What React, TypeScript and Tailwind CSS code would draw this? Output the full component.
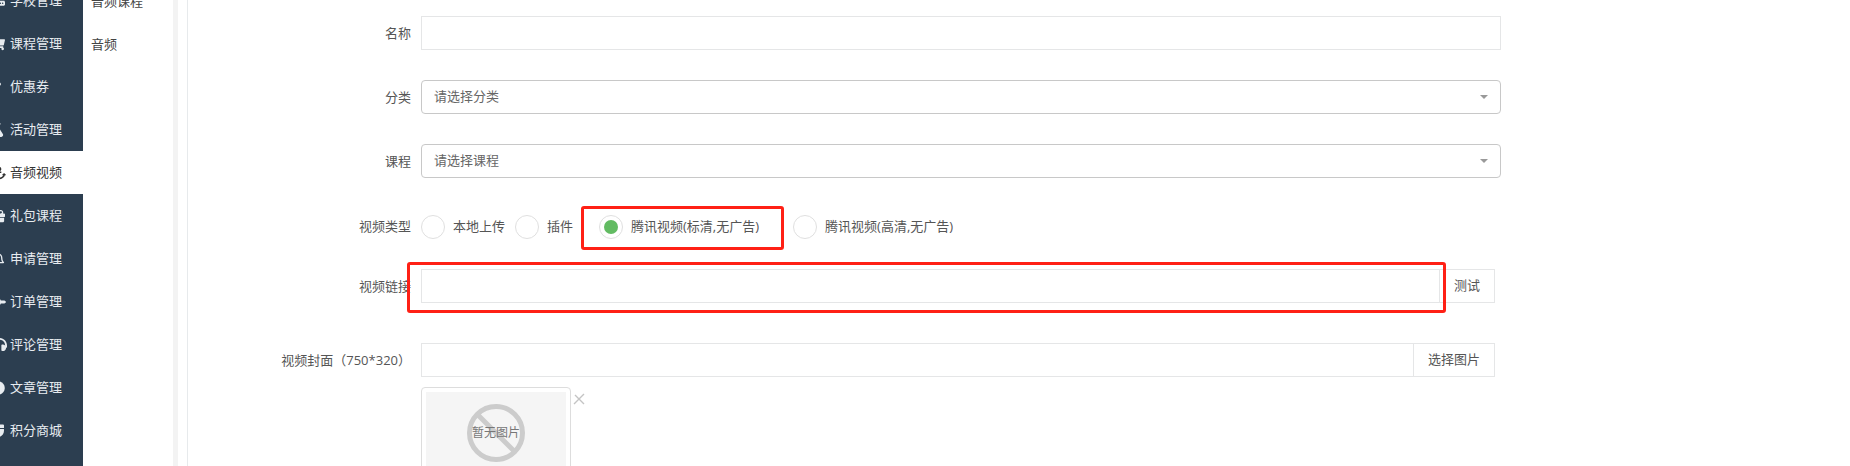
import { FC } from 'react'
import { FaAnchor, FaCircle, FaGift, FaHeadphones, FaHdd, FaMagnet, FaPlane, FaRegBell, FaShoppingCart, FaTag, FaFlask } from 'react-icons/fa'

const font = 'font-["Open_Sans","Noto_Sans_CJK_SC",sans-serif]'

const menu = [
  { label: '学校管理', icon: FaHdd, iconClass: '-ml-[9px] mr-[5px] size-[14px]' },
  { label: '课程管理', icon: FaShoppingCart, iconClass: '-ml-[9px] mr-[5px] size-[14px]' },
  { label: '优惠券', icon: FaTag, iconClass: '-mt-[6px] -ml-[13px] mr-[9px] size-[14px]' },
  { label: '活动管理', icon: FaFlask, iconClass: '-ml-[10px] mr-[6px] size-[14px]' },
  { label: '音频视频', icon: FaAnchor, iconClass: '-ml-[8px] mr-[4px] size-[14px]', active: true },
  { label: '礼包课程', icon: FaGift, iconClass: '-ml-[9px] mr-[5px] size-[14px]' },
  { label: '申请管理', icon: FaRegBell, iconClass: '-ml-[9px] mr-[5px] size-[14px]' },
  { label: '订单管理', icon: FaPlane, iconClass: '-ml-[8px] mr-[4px] size-[14px]' },
  { label: '评论管理', icon: FaHeadphones, iconClass: '-ml-[8px] mr-[3px] size-[15px]' },
  { label: '文章管理', icon: FaCircle, iconClass: '-ml-[9px] mr-[5px] size-[14px]' },
  { label: '积分商城', icon: FaMagnet, iconClass: '-ml-[10px] mr-[6px] size-[14px]' },
]

const Sidebar: FC = () => (
  <aside className="-mt-[21px] w-[83px] shrink-0 bg-[#2c3e50]">
    {menu.map((item) => (
      <div
        key={item.label}
        className={
          item.active
            ? 'flex h-[43px] items-center bg-white text-[#333]'
            : 'flex h-[43px] items-center text-[#e8ecf0]'
        }
      >
        <item.icon className={`shrink-0 ${item.iconClass}`} />
        <span className="whitespace-nowrap">{item.label}</span>
      </div>
    ))}
  </aside>
)

const SubMenu: FC = () => (
  <div className="-mt-[20px] w-[90px] shrink-0 bg-white pl-2 text-[#444]">
    <div className="flex h-[43px] items-center">音频课程</div>
    <div className="flex h-[43px] items-center">音频</div>
  </div>
)

const Label: FC<{ text: string }> = ({ text }) => (
  <label className="w-[233px] shrink-0 pt-[2px] pr-[10px] text-right whitespace-nowrap text-[#555]">{text}</label>
)

const Select: FC<{ placeholder: string; className: string }> = ({ placeholder, className }) => (
  <div className={`flex items-center ${className}`}>
    <Label text={placeholder.slice(3)} />
    <div className="flex h-[34px] w-[1080px] items-center justify-between rounded-[4px] border border-[#c8c8c8] pr-3 pl-3 text-[#666]">
      <span>{placeholder}</span>
      <span className="border-x-4 border-t-4 border-x-transparent border-t-[#999]" />
    </div>
  </div>
)

const Radio: FC<{ label: string; checked?: boolean; className: string }> = ({ label, checked, className }) => (
  <div className={`flex items-center ${className}`}>
    <span className="mr-2 flex size-6 items-center justify-center rounded-full border border-[#e0e0e0]">
      {checked && <span className="size-[14px] rounded-full bg-[#62bb62]" />}
    </span>
    <span className="whitespace-nowrap text-[#555]">{label}</span>
  </div>
)

const Form: FC = () => (
  <div className="relative flex-1 pt-4">
    <div className="mb-[30px] flex items-center">
      <Label text="名称" />
      <div className="h-[34px] w-[1080px] border border-[#e5e6e7]" />
    </div>
    <Select placeholder="请选择分类" className="mb-[30px]" />
    <Select placeholder="请选择课程" className="mb-[37px]" />
    <div className="mb-[30px] flex h-6 items-center">
      <label className="w-[233px] shrink-0 pr-[10px] text-right whitespace-nowrap text-[#555]">视频类型</label>
      <Radio label="本地上传" className="mr-[10px]" />
      <Radio label="插件" className="mr-[26px]" />
      <Radio label="腾讯视频(标清,无广告)" checked className="mr-[34px]" />
      <Radio label="腾讯视频(高清,无广告)" className="" />
    </div>
    <div className="mb-[40px] flex items-center">
      <Label text="视频链接" />
      <div className="flex h-[34px] w-[1074px]">
        <div className="flex-1 border border-[#e5e6e7]" />
        <div className="flex w-[55px] items-center justify-center border border-l-0 border-[#e5e6e7] text-[#555]">测试</div>
      </div>
    </div>
    <div className="flex items-center">
      <label className="w-[233px] shrink-0 pt-[2px] pr-[10px] text-right whitespace-nowrap text-[#555]">视频封面（750*320）</label>
      <div className="flex h-[34px] w-[1074px]">
        <div className="flex-1 border border-[#e5e6e7]" />
        <div className="flex w-[81px] items-center justify-center border border-l-0 border-[#e5e6e7] text-[#555]">选择图片</div>
      </div>
    </div>
    <div className="mt-[10px] ml-[233px] flex items-start">
      <div className="h-[120px] w-[150px] rounded-[4px] border border-[#ddd] p-1">
        <div className="flex h-full items-start justify-center bg-[#f5f5f5] pt-[12px]">
          <div className="relative flex size-[58px] items-center justify-center">
            <svg viewBox="0 0 58 58" className="absolute inset-0 size-[58px]" fill="none" stroke="#cccccc" strokeWidth="5">
              <circle cx="29" cy="29" r="26.5" />
              <path d="M10 10 L48 48" />
            </svg>
            <span className="relative text-xs whitespace-nowrap text-[#777]">暂无图片</span>
          </div>
        </div>
      </div>
      <svg viewBox="0 0 14 14" className="mt-[5px] ml-[1px] size-[14px]" fill="none" stroke="#c4c4c4" strokeWidth="1.4">
        <path d="M2 12 L12 2 M3 3 L12 12" />
      </svg>
    </div>
    <div className="absolute top-[206px] left-[393px] h-[44px] w-[203px] rounded-[3px] border-[3px] border-[#ff2015]" />
    <div className="absolute top-[262px] left-[219px] h-[51px] w-[1039px] rounded-[3px] border-[3px] border-[#ff2015]" />
  </div>
)

export default function App() {
  return (
    <div className={`flex h-[466px] w-[1850px] overflow-hidden bg-white text-[13px] ${font}`}>
      <Sidebar />
      <SubMenu />
      <div className="w-[5px] shrink-0 bg-[#f3f3f3]" />
      <div className="w-[10px] shrink-0 border-r border-[#e7eaec] bg-white" />
      <Form />
    </div>
  )
}
